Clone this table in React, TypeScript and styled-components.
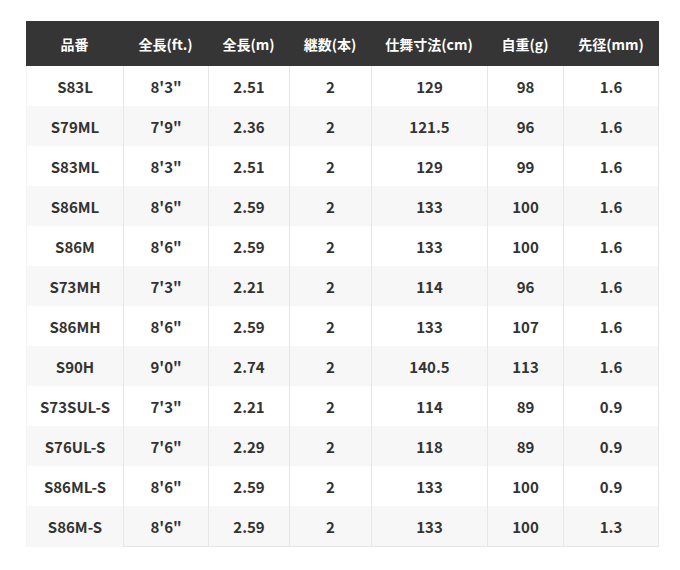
import styled, { createGlobalStyle } from "styled-components";

const GlobalStyle = createGlobalStyle`
  body {
    margin: 0;
    background: #ffffff;
    font-family: "Noto Sans CJK JP", "Noto Sans", sans-serif;
  }
`;

const Wrap = styled.div`
  padding: 21px 0 0 26px;
`;

const Table = styled.table`
  border-collapse: separate;
  border-spacing: 0;
  table-layout: fixed;
  width: 633px;
`;

const HeadCell = styled.th`
  height: 45px;
  padding: 0;
  background: #353535;
  color: #ffffff;
  font-size: 14px;
  font-weight: 700;
  text-align: center;
`;

const Row = styled.tr<{ $shaded: boolean }>`
  background: ${({ $shaded }) => ($shaded ? "#f7f7f7" : "#ffffff")};
`;

const Cell = styled.td<{ $first: boolean; $last: boolean; $bottom: boolean }>`
  height: 40px;
  padding: 0;
  text-align: center;
  color: #333333;
  font-size: 15px;
  font-weight: 700;
  border-left: 1px solid ${({ $first }) => ($first ? "#f3f3f3" : "#e6e6e6")};
  border-right: ${({ $last }) => ($last ? "1px solid #e6e6e6" : "none")};
  border-bottom: ${({ $bottom, $first }) =>
    $bottom && !$first ? "1px solid #e6e6e6" : "none"};
`;

const columns = [
  { label: "品番", width: 97 },
  { label: "全長(ft.)", width: 85 },
  { label: "全長(m)", width: 81 },
  { label: "継数(本)", width: 82 },
  { label: "仕舞寸法(cm)", width: 116 },
  { label: "自重(g)", width: 76 },
  { label: "先径(mm)", width: 96 },
];

const rows = [
  ["S83L", "8'3\"", "2.51", "2", "129", "98", "1.6"],
  ["S79ML", "7'9\"", "2.36", "2", "121.5", "96", "1.6"],
  ["S83ML", "8'3\"", "2.51", "2", "129", "99", "1.6"],
  ["S86ML", "8'6\"", "2.59", "2", "133", "100", "1.6"],
  ["S86M", "8'6\"", "2.59", "2", "133", "100", "1.6"],
  ["S73MH", "7'3\"", "2.21", "2", "114", "96", "1.6"],
  ["S86MH", "8'6\"", "2.59", "2", "133", "107", "1.6"],
  ["S90H", "9'0\"", "2.74", "2", "140.5", "113", "1.6"],
  ["S73SUL-S", "7'3\"", "2.21", "2", "114", "89", "0.9"],
  ["S76UL-S", "7'6\"", "2.29", "2", "118", "89", "0.9"],
  ["S86ML-S", "8'6\"", "2.59", "2", "133", "100", "0.9"],
  ["S86M-S", "8'6\"", "2.59", "2", "133", "100", "1.3"],
];

export default function App() {
  return (
    <>
      <GlobalStyle />
      <Wrap>
        <Table>
          <colgroup>
            {columns.map((c) => (
              <col key={c.label} style={{ width: c.width }} />
            ))}
          </colgroup>
          <thead>
            <tr>
              {columns.map((c) => (
                <HeadCell key={c.label}>{c.label}</HeadCell>
              ))}
            </tr>
          </thead>
          <tbody>
            {rows.map((r, i) => (
              <Row key={r[0]} $shaded={i % 2 === 1}>
                {r.map((v, j) => (
                  <Cell
                    key={j}
                    $first={j === 0}
                    $last={j === r.length - 1}
                    $bottom={i === rows.length - 1}
                  >
                    {v}
                  </Cell>
                ))}
              </Row>
            ))}
          </tbody>
        </Table>
      </Wrap>
    </>
  );
}
